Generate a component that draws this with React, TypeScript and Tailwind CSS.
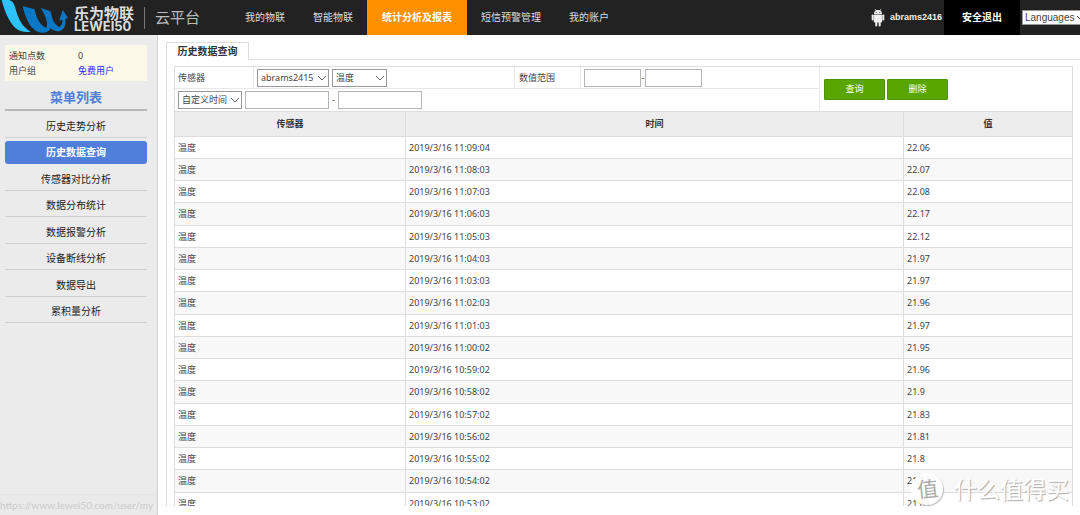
import React from 'react';

const navItems = ['我的物联', '智能物联', '统计分析及报表', '短信预警管理', '我的账户'];
const menuItems = [
  '历史走势分析',
  '历史数据查询',
  '传感器对比分析',
  '数据分布统计',
  '数据报警分析',
  '设备断线分析',
  '数据导出',
  '累积量分析',
];
const readings: [string, string][] = [
  ['2019/3/16 11:09:04', '22.06'],
  ['2019/3/16 11:08:03', '22.07'],
  ['2019/3/16 11:07:03', '22.08'],
  ['2019/3/16 11:06:03', '22.17'],
  ['2019/3/16 11:05:03', '22.12'],
  ['2019/3/16 11:04:03', '21.97'],
  ['2019/3/16 11:03:03', '21.97'],
  ['2019/3/16 11:02:03', '21.96'],
  ['2019/3/16 11:01:03', '21.97'],
  ['2019/3/16 11:00:02', '21.95'],
  ['2019/3/16 10:59:02', '21.96'],
  ['2019/3/16 10:58:02', '21.9'],
  ['2019/3/16 10:57:02', '21.83'],
  ['2019/3/16 10:56:02', '21.81'],
  ['2019/3/16 10:55:02', '21.8'],
  ['2019/3/16 10:54:02', '21.84'],
  ['2019/3/16 10:53:02', '21.83'],
];

function Logo() {
  return (
    <svg viewBox="0 0 210 105" className="h-[35px] w-[70px] shrink-0" aria-hidden="true">
      <path d="M5 0H27C39 4 43 12 46 24C53 53 66 81 92 95C75 98 58 94 46 84C27 65 13 33 5 0Z" fill="#2cc3fa" />
      <path
        d="M68 18L104 28C107 50 119 75 138 84C144 78 143 56 122 24L152 34C154 55 164 75 177 81C186 77 188 68 187 60L178 61L188 29L204 54L196 57C199 80 188 97 168 93C160 91 155 88 152 84C148 94 138 99 124 98C94 95 76 55 68 18Z"
        fill="#0878c6"
      />
    </svg>
  );
}

function Android() {
  return (
    <svg viewBox="0 0 14 18" className="h-[18px] w-[14px]" fill="#eee" aria-hidden="true">
      <path d="M3 5a4 4 0 0 1 8 0Z" />
      <path d="M4 0l1.400 2M10 0L8.600 2" stroke="#eee" strokeWidth="0.700" />
      <rect x="2.800" y="5.400" width="8.400" height="8.200" rx="1" />
      <rect x="0.700" y="5.400" width="1.900" height="6" rx="0.900" />
      <rect x="11.400" y="5.400" width="1.900" height="6" rx="0.900" />
      <rect x="4.300" y="12" width="2" height="5.500" rx="1" />
      <rect x="7.700" y="12" width="2" height="5.500" rx="1" />
      <circle cx="5.200" cy="3.500" r="0.500" fill="#222" />
      <circle cx="8.800" cy="3.500" r="0.500" fill="#222" />
    </svg>
  );
}

function Picker({ label, value, className }: { label: string; value: string; className: string }) {
  return (
    <span className={`relative inline-block shrink-0 ${className}`}>
      <select
        aria-label={label}
        className="block h-[18px] w-full appearance-none border border-[#999] bg-white pl-[3px] leading-4 outline-none"
      >
        <option>{value}</option>
      </select>
      <svg viewBox="0 0 10 6" className="pointer-events-none absolute top-[6px] right-[2px] h-[6px] w-[10px]" fill="none" stroke="#666">
        <path d="M1 1l4 4 4-4" />
      </svg>
    </span>
  );
}

function Field({ label, className }: { label: string; className: string }) {
  return <input type="text" aria-label={label} className={`h-[18px] shrink-0 border border-[#b5b5b5] bg-white px-1 outline-none ${className}`} />;
}

export default function App() {
  return (
    <div className="relative flex h-screen flex-col overflow-hidden bg-white font-['Noto_Sans','Noto_Sans_CJK_SC',sans-serif] text-[9px] text-[#444]">
      <header className="flex h-[35px] shrink-0 bg-[#222] text-[#ddd]">
        <a href="#" className="flex w-[231px] shrink-0 items-center" aria-label="乐为物联 云平台">
          <Logo />
          <span className="ml-1 flex w-[62px] flex-col font-bold text-[#ddd]">
            <span className="text-[15px] leading-[16px]">乐为物联</span>
            <span className="font-['Inter',sans-serif] text-[13px] leading-[10px]">LEWEI50</span>
          </span>
          <span className="ml-2 h-[22px] w-px bg-[#777]" />
          <span className="ml-[10px] text-[15px] text-[#bbb]">云平台</span>
        </a>
        <nav className="flex text-[10px]">
          {navItems.map((item, i) => (
            <a
              key={item}
              href="#"
              className={`flex items-center ${i === 2 ? 'bg-[#ff9000] px-[15px] font-bold text-white' : 'px-[14px]'}`}
            >
              {item}
            </a>
          ))}
        </nav>
        <div className="ml-auto flex items-center">
          <Android />
          <span className="mr-[2px] ml-[5px] font-['Liberation_Sans',sans-serif] font-bold text-[#eee]">abrams2416</span>
          <button className="h-full w-[76px] bg-black text-[10px] font-bold text-white">安全退出</button>
          <span className="relative ml-[2px] w-[58px] overflow-hidden">
            <select
              aria-label="Languages"
              className="block h-[15px] w-[62px] appearance-none border border-[#999] bg-white pl-[2px] font-['Liberation_Sans',sans-serif] text-[10px] leading-[13px] text-[#444]"
            >
              <option>Languages</option>
            </select>
            <svg viewBox="0 0 10 6" className="pointer-events-none absolute top-[5px] right-[-6px] h-[6px] w-[10px]" fill="none" stroke="#555">
              <path d="M1 1l4 4 4-4" />
            </svg>
          </span>
        </div>
      </header>

      <div className="flex min-h-0 flex-1">
        <aside className="w-[158px] shrink-0 border-r border-[#d0d0d0] bg-[#ebebeb] pt-[10px] pr-[10px] pl-[5px]">
          <dl className="grid grid-cols-[69px_1fr] content-center bg-[#fdf9e9] px-1 py-[3px] leading-[15px]">
            <dt>通知点数</dt>
            <dd>0</dd>
            <dt>用户组</dt>
            <dd>
              <a href="#" className="text-[#2a1fff]">免费用户</a>
            </dd>
          </dl>
          <h2 className="h-[30px] border-b-2 border-[#b8b8b8] text-center text-[13px] leading-[33px] font-bold text-[#4f7fda]">菜单列表</h2>
          <ul className="pt-1 text-center text-[10px] text-[#222]">
            {menuItems.map((item, i) => (
              <li key={item} className="h-[26px] even:h-[27px]">
                <a
                  href="#"
                  className={`block h-[23px] leading-[23px] ${i === 1 ? 'rounded-[3px] bg-[#4f7fda] font-bold text-white' : 'border-b border-[#d0d0d0]'}`}
                >
                  {item}
                </a>
              </li>
            ))}
          </ul>
        </aside>

        <main className="mb-[9px] flex min-w-0 flex-1 flex-col overflow-hidden pt-[7px] pl-2">
          <div className="flex h-[18px] shrink-0">
            <button className="w-[83px] border-x border-t border-[#ddd] bg-white text-[10px] font-bold text-[#333]">历史数据查询</button>
            <div className="flex-1 border-b border-[#ddd]" />
          </div>
          <div className="min-h-0 flex-1 overflow-hidden border-l border-[#ddd] pt-[6px] pr-[7px] pl-[7px]">
            <form className="flex h-[45px] border border-b-0 border-[#ddd]" onSubmit={(e) => e.preventDefault()}>
              <div className="w-[645px] shrink-0 border-r border-[#e8e8e8]">
                <div className="flex h-[22px] border-b border-[#e8e8e8]">
                  <span className="flex w-[79px] items-center border-r border-[#e8e8e8] pl-[3px]">传感器</span>
                  <span className="flex w-[261px] items-center gap-[3px] border-r border-[#e8e8e8] pl-[3px]">
                    <Picker label="设备" value="abrams2415" className="w-[72px]" />
                    <Picker label="传感器" value="温度" className="w-[55px]" />
                  </span>
                  <span className="flex w-[66px] items-center border-r border-[#e8e8e8] pl-1">数值范围</span>
                  <span className="flex items-center pl-[3px]">
                    <Field label="最小值" className="w-[57px]" />
                    <span className="w-1 text-center">-</span>
                    <Field label="最大值" className="w-[57px]" />
                  </span>
                </div>
                <div className="flex h-[22px] items-center pl-[3px]">
                  <Picker label="时间" value="自定义时间" className="w-[64px]" />
                  <Field label="开始时间" className="ml-[3px] w-[84px]" />
                  <span className="w-[9px] text-center">-</span>
                  <Field label="结束时间" className="w-[84px]" />
                </div>
              </div>
              <div className="flex items-center gap-[2px] pl-1 text-white">
                <button className="h-[21px] w-[61px] rounded-[1px] border border-[#4d9400] bg-[#5aa600]">查询</button>
                <button className="h-[21px] w-[61px] rounded-[1px] border border-[#4d9400] bg-[#5aa600]">删除</button>
              </div>
            </form>
            <table className="w-full table-fixed border-collapse text-left leading-4">
              <colgroup>
                <col className="w-[231px]" />
                <col />
                <col className="w-[169px]" />
              </colgroup>
              <thead>
                <tr className="h-[25px] bg-[#ededed] text-center text-[#333]">
                  <th className="border border-[#ddd] font-bold">传感器</th>
                  <th className="border border-[#ddd] font-bold">时间</th>
                  <th className="border border-[#ddd] font-bold">值</th>
                </tr>
              </thead>
              <tbody>
                {readings.map(([time, value]) => (
                  <tr key={time} className="h-[22px] even:bg-[#f8f8f8] nth-[4n]:h-[23px]">
                    <td className="border border-[#ddd] px-[3px]">温度</td>
                    <td className="border border-[#ddd] px-[3px]">{time}</td>
                    <td className="border border-[#ddd] px-[3px]">{value}</td>
                  </tr>
                ))}
              </tbody>
            </table>
          </div>
        </main>
      </div>

      <div className="absolute bottom-0 left-0 h-[21px] w-[157px] border-t border-[#e6e6e6] bg-[#eaeaea] font-['Lato',sans-serif] text-[10px] leading-[21px] whitespace-nowrap text-[#ccc]">
        https://www.lewei50.com/user/my
      </div>

      <div className="pointer-events-none absolute right-[11px] bottom-[10px] flex items-center gap-[11px] text-white [text-shadow:1px_1px_1px_#aaa]">
        <span className="flex size-8 items-center justify-center rounded-full bg-white/90 text-[21px] leading-8 text-[#aaa] shadow-[1px_1px_1px_#bbb] [text-shadow:none]">
          <span className="-rotate-6">值</span>
        </span>
        <span className="text-[23px] leading-8">什么值得买</span>
      </div>
    </div>
  );
}
